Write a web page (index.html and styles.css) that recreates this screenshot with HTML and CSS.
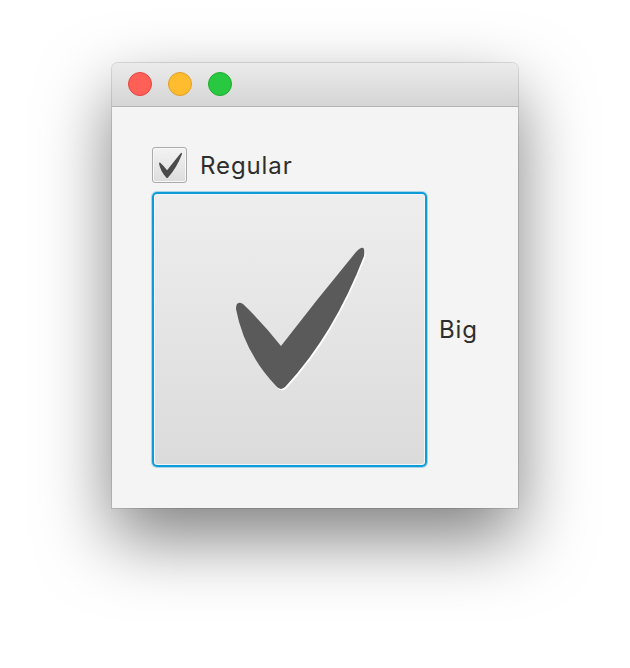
FILE: index.html
```html
<!DOCTYPE html>
<html>
<head>
<meta charset="utf-8">
<link rel="stylesheet" href="styles.css">
</head>
<body>
<div class="stage">
  <div class="window">
    <div class="titlebar">
      <span class="light red"></span>
      <span class="light yellow"></span>
      <span class="light green"></span>
    </div>
    <div class="content">
      <div class="row small-row">
        <span class="box small">
          <svg class="small-check" viewBox="78 52 140 150" width="25" height="27">
            <path fill="#4a4a4a" d="M84,117 Q84,108 91,112 Q111,131 129,154 Q166,106 204,60 Q214,50 212,64 Q182,142 134,194 Q129,200 124,194 Q92,160 84,117 Z"/>
          </svg>
        </span>
        <span class="label">Regular</span>
      </div>
      <div class="row big-row">
        <span class="box big">
          <svg class="big-check" viewBox="2 2 271 271">
            <path fill="#ffffff" transform="translate(1.2,1.6)" d="M84,117 Q84,108 91,112 Q111,131 129,154 Q166,106 204,60 Q214,50 212,64 Q182,142 134,194 Q129,200 124,194 Q92,160 84,117 Z"/>
            <path fill="#5a5a5a" d="M84,117 Q84,108 91,112 Q111,131 129,154 Q166,106 204,60 Q214,50 212,64 Q182,142 134,194 Q129,200 124,194 Q92,160 84,117 Z"/>
          </svg>
        </span>
        <span class="label">Big</span>
      </div>
    </div>
  </div>
</div>
</body>
</html>
```

FILE: styles.css
```css
html, body {
  margin: 0;
  padding: 0;
  background: #ffffff;
}

.stage {
  width: 630px;
  height: 668px;
  padding: 63px 0 0 112px;
  box-sizing: border-box;
}

.window {
  width: 406px;
  height: 445px;
  border-radius: 6px 6px 0 0;
  background: #f4f4f4;
  box-shadow: 0 30px 70px rgba(0, 0, 0, 0.5), 0 0 0 1px rgba(0, 0, 0, 0.12);
  display: flex;
  flex-direction: column;
  overflow: hidden;
}

.titlebar {
  height: 44px;
  box-sizing: border-box;
  background: linear-gradient(#ebebeb, #d5d5d5);
  border-bottom: 1px solid #b4b4b4;
  display: flex;
  align-items: center;
  padding: 0 0 1px 16px;
  gap: 16px;
}

.light {
  width: 24px;
  height: 24px;
  border-radius: 50%;
  box-sizing: border-box;
}
.red { background: #fe5f57; border: 1px solid #e2463f; }
.yellow { background: #febc2e; border: 1px solid #e0a02a; }
.green { background: #28c840; border: 1px solid #1fab2f; }

.content {
  padding: 40px 0 0 40px;
  display: flex;
  flex-direction: column;
  gap: 9px;
}

.row {
  display: flex;
  align-items: center;
}

.label {
  font-family: Inter, "Open Sans", "Liberation Sans", sans-serif;
  font-size: 24px;
  letter-spacing: 0.9px;
  color: #2e2e2e;
}

.small-row { gap: 13px; }
.big-row { gap: 12px; }

.box {
  box-sizing: border-box;
  display: flex;
  align-items: center;
  justify-content: center;
  position: relative;
}

.small {
  width: 35px;
  height: 36px;
  border: 1px solid #ababab;
  border-radius: 3px;
  background: linear-gradient(#f3f3f3, #dddddd);
  box-shadow: inset 0 0 0 1px #f7f7f7;
}

.small-check {
  margin: 0 0 0 1px;
}

.big {
  width: 275px;
  height: 275px;
  border: 2px solid #0f9ad8;
  border-radius: 5px;
  background: linear-gradient(#eeeeee, #dbdbdb);
  box-shadow: inset 0 0 0 1px #f3f6f8, 0 0 0 1px rgba(15, 154, 216, 0.35);
}

.big-check {
  width: 271px;
  height: 271px;
}
```
